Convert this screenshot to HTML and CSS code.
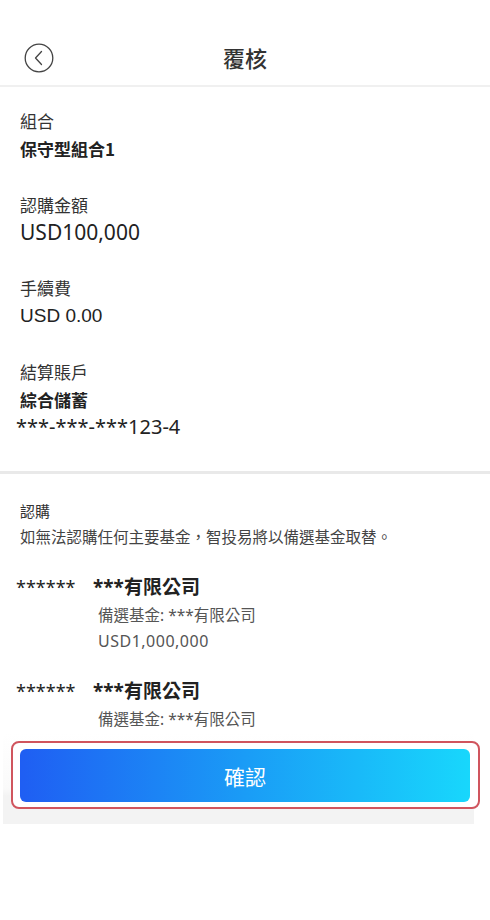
FILE: index.html
```html
<!DOCTYPE html>
<html lang="zh-Hant">
<head>
<meta charset="utf-8">
<title>覆核</title>
<link rel="stylesheet" href="styles.css">
</head>
<body>
<div class="page">
  <header class="topbar">
    <div class="back">
      <svg width="30" height="30" viewBox="0 0 30 30" aria-hidden="true">
        <circle cx="15" cy="15" r="13.8" fill="none" stroke="#444" stroke-width="1.3"/>
        <polyline points="17.5,8.5 11.5,15 17.5,21.5" fill="none" stroke="#444" stroke-width="1.3" stroke-linecap="round" stroke-linejoin="round"/>
      </svg>
    </div>
    <h1 class="title">覆核</h1>
    <div class="spacer"></div>
  </header>

  <section class="summary">
    <div class="item">
      <div class="label">組合</div>
      <div class="value bold">保守型組合1</div>
    </div>
    <div class="item">
      <div class="label">認購金額</div>
      <div class="value amount">USD100,000</div>
    </div>
    <div class="item">
      <div class="label">手續費</div>
      <div class="value fee">USD 0.00</div>
    </div>
    <div class="item">
      <div class="label">結算賬戶</div>
      <div class="value bold">綜合儲蓄</div>
      <div class="value account">***-***-***123-4</div>
    </div>
  </section>

  <section class="funds">
    <div class="sub-label">認購</div>
    <div class="note">如無法認購任何主要基金，智投易將以備選基金取替。</div>

    <div class="fund">
      <div class="code">******</div>
      <div class="detail">
        <div class="name">***有限公司</div>
        <div class="alt">備選基金: ***有限公司</div>
        <div class="alt money">USD1,000,000</div>
      </div>
    </div>

    <div class="fund second">
      <div class="code">******</div>
      <div class="detail">
        <div class="name">***有限公司</div>
        <div class="alt">備選基金: ***有限公司</div>
      </div>
    </div>
  </section>

  <footer class="footer">
    <div class="highlight">
      <button class="confirm" type="button">確認</button>
    </div>
  </footer>
</div>
</body>
</html>
```

FILE: styles.css
```css
* { box-sizing: border-box; }

html, body {
  margin: 0;
  padding: 0;
  background: #ffffff;
}

body {
  font-family: "Noto Sans", "Noto Sans CJK TC", sans-serif;
  color: #333333;
}

.page {
  width: 490px;
}

.topbar {
  height: 87px;
  padding-top: 30px;
  display: grid;
  grid-template-columns: 1fr auto 1fr;
  align-items: center;
  border-bottom: 2px solid #f0f0f0;
}

.back {
  padding-left: 24px;
  height: 55px;
  display: flex;
  align-items: center;
}

.back svg { display: block; }

.title {
  margin: 0;
  font-family: "Noto Sans CJK TC", sans-serif;
  font-size: 22px;
  font-weight: 500;
  color: #333333;
  line-height: 55px;
}

.summary {
  padding: 20px 20px 31px;
  display: flex;
  flex-direction: column;
  gap: 29px;
  border-bottom: 3px solid #e9e9e9;
}

.label {
  font-family: "Noto Sans CJK TC", sans-serif;
  font-size: 17px;
  line-height: 28px;
  color: #333333;
}

.value {
  font-size: 17px;
  line-height: 27px;
  color: #222222;
}

.bold {
  font-family: "Noto Sans CJK TC", sans-serif;
  font-weight: 700;
}

.amount {
  font-family: "Noto Sans", sans-serif;
  font-size: 21px;
  line-height: 26px;
  color: #222222;
}

.fee {
  font-family: "Liberation Sans", Arial, sans-serif;
  font-size: 19px;
}

.account {
  margin-left: -4px;
  font-family: "Noto Sans", sans-serif;
  font-size: 20px;
  color: #222222;
}

.funds {
  padding: 25px 20px 0;
}

.sub-label {
  font-family: "Noto Sans CJK TC", sans-serif;
  font-size: 15px;
  line-height: 24px;
  color: #333333;
}

.note {
  font-family: "Noto Sans CJK TC", sans-serif;
  font-size: 15.5px;
  line-height: 26px;
  color: #444444;
}

.fund {
  margin-top: 23px;
  margin-left: -4px;
  display: grid;
  grid-template-columns: 77px 1fr;
}

.fund.second { margin-top: 22px; }

.code {
  font-family: "Noto Sans", sans-serif;
  font-size: 18px;
  line-height: 30px;
  color: #222222;
}

.name {
  font-family: "Noto Sans", "Noto Sans CJK TC", sans-serif;
  font-size: 19px;
  font-weight: 700;
  line-height: 30px;
  color: #222222;
}

.alt {
  padding-left: 5px;
  font-family: "Noto Sans", "Noto Sans CJK TC", sans-serif;
  font-size: 15.5px;
  line-height: 26px;
  color: #555555;
}

.alt.money {
  font-size: 16px;
  letter-spacing: 0.5px;
}

.footer {
  margin: 1px 16px 0 3px;
  height: 91px;
  padding-top: 8px;
  background: linear-gradient(to bottom, #ffffff 0, #fafafa 55px, #f3f3f3 63px, #f3f3f3 100%);
}

.highlight {
  margin-left: 8px;
  width: 469px;
  height: 68px;
  padding: 6px 8px 5px 7px;
  border: 2px solid #d0555e;
  border-radius: 8px;
  background: #ffffff;
}

.confirm {
  display: block;
  width: 100%;
  height: 53px;
  border: none;
  border-radius: 6px;
  background: linear-gradient(to right, #1f5ef3 0%, #1a9cf6 50%, #18d7fc 100%);
  color: #ffffff;
  font-family: "Noto Sans CJK TC", sans-serif;
  font-size: 21px;
  font-weight: 400;
  padding: 0;
  cursor: pointer;
}
```
